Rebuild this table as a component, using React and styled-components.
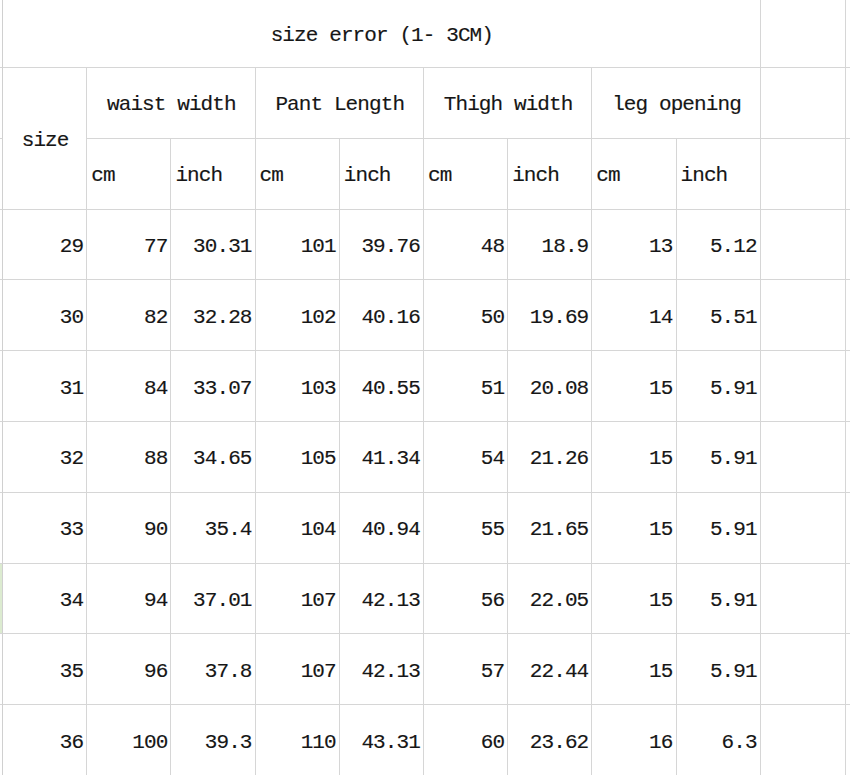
import React from 'react'
import styled, { createGlobalStyle } from 'styled-components'

const GlobalStyle = createGlobalStyle`
  html, body {
    margin: 0;
    padding: 0;
    background: #ffffff;
  }
  body {
    font-family: "Liberation Mono", "DejaVu Sans Mono", monospace;
  }
`

const groups = ['waist width', 'Pant Length', 'Thigh width', 'leg opening']

const rows = [
  ['29', '77', '30.31', '101', '39.76', '48', '18.9', '13', '5.12'],
  ['30', '82', '32.28', '102', '40.16', '50', '19.69', '14', '5.51'],
  ['31', '84', '33.07', '103', '40.55', '51', '20.08', '15', '5.91'],
  ['32', '88', '34.65', '105', '41.34', '54', '21.26', '15', '5.91'],
  ['33', '90', '35.4', '104', '40.94', '55', '21.65', '15', '5.91'],
  ['34', '94', '37.01', '107', '42.13', '56', '22.05', '15', '5.91'],
  ['35', '96', '37.8', '107', '42.13', '57', '22.44', '15', '5.91'],
  ['36', '100', '39.3', '110', '43.31', '60', '23.62', '16', '6.3'],
]

const Sheet = styled.div`
  display: grid;
  grid-template-columns: 3px repeat(9, 84.2px) 85px 1fr;
  grid-template-rows: 68px repeat(10, 70.8px);
  width: 850px;
  height: 775px;
  overflow: hidden;
  background: #ffffff;
  color: #161616;
  font-size: 21px;
  letter-spacing: -0.9px;
  -webkit-text-stroke: 0.15px #161616;
`

const Cell = styled.div`
  box-sizing: border-box;
  border-right: 1px solid #d6d6d6;
  border-bottom: 1px solid #d6d6d6;
  display: flex;
  align-items: center;
  justify-content: ${p =>
    p.$align === 'right' ? 'flex-end' : p.$align === 'left' ? 'flex-start' : 'center'};
  padding: 4px 3px 0 4px;
  white-space: nowrap;
  grid-column: ${p => (p.$span ? `span ${p.$span}` : 'auto')};
  grid-row: ${p => (p.$rows ? `span ${p.$rows}` : 'auto')};
`

const Gutter = styled.div`
  box-sizing: border-box;
  border-right: 1px solid #d0d0d0;
  border-bottom: 1px solid #d6d6d6;
  background: ${p => (p.$active ? '#dcebd0' : '#ffffff')};
`

const Blank = styled(Cell)`
  padding: 0;
`

const Edge = styled(Blank)`
  border-right: none;
`

export default function App() {
  return (
    <>
      <GlobalStyle />
      <Sheet>
        <Gutter />
        <Cell $span={9}>size error (1- 3CM)</Cell>
        <Blank />
        <Edge />

        <Gutter />
        <Cell $rows={2}>size</Cell>
        {groups.map(g => (
          <Cell key={g} $span={2}>
            {g}
          </Cell>
        ))}
        <Blank />
        <Edge />

        <Gutter />
        {groups.map(g => (
          <React.Fragment key={g}>
            <Cell $align="left">cm</Cell>
            <Cell $align="left">inch</Cell>
          </React.Fragment>
        ))}
        <Blank />
        <Edge />

        {rows.map(r => (
          <React.Fragment key={r[0]}>
            <Gutter $active={r[0] === '34'} />
            {r.map((v, i) => (
              <Cell key={i} $align="right">
                {v}
              </Cell>
            ))}
            <Blank />
            <Edge />
          </React.Fragment>
        ))}
      </Sheet>
    </>
  )
}
